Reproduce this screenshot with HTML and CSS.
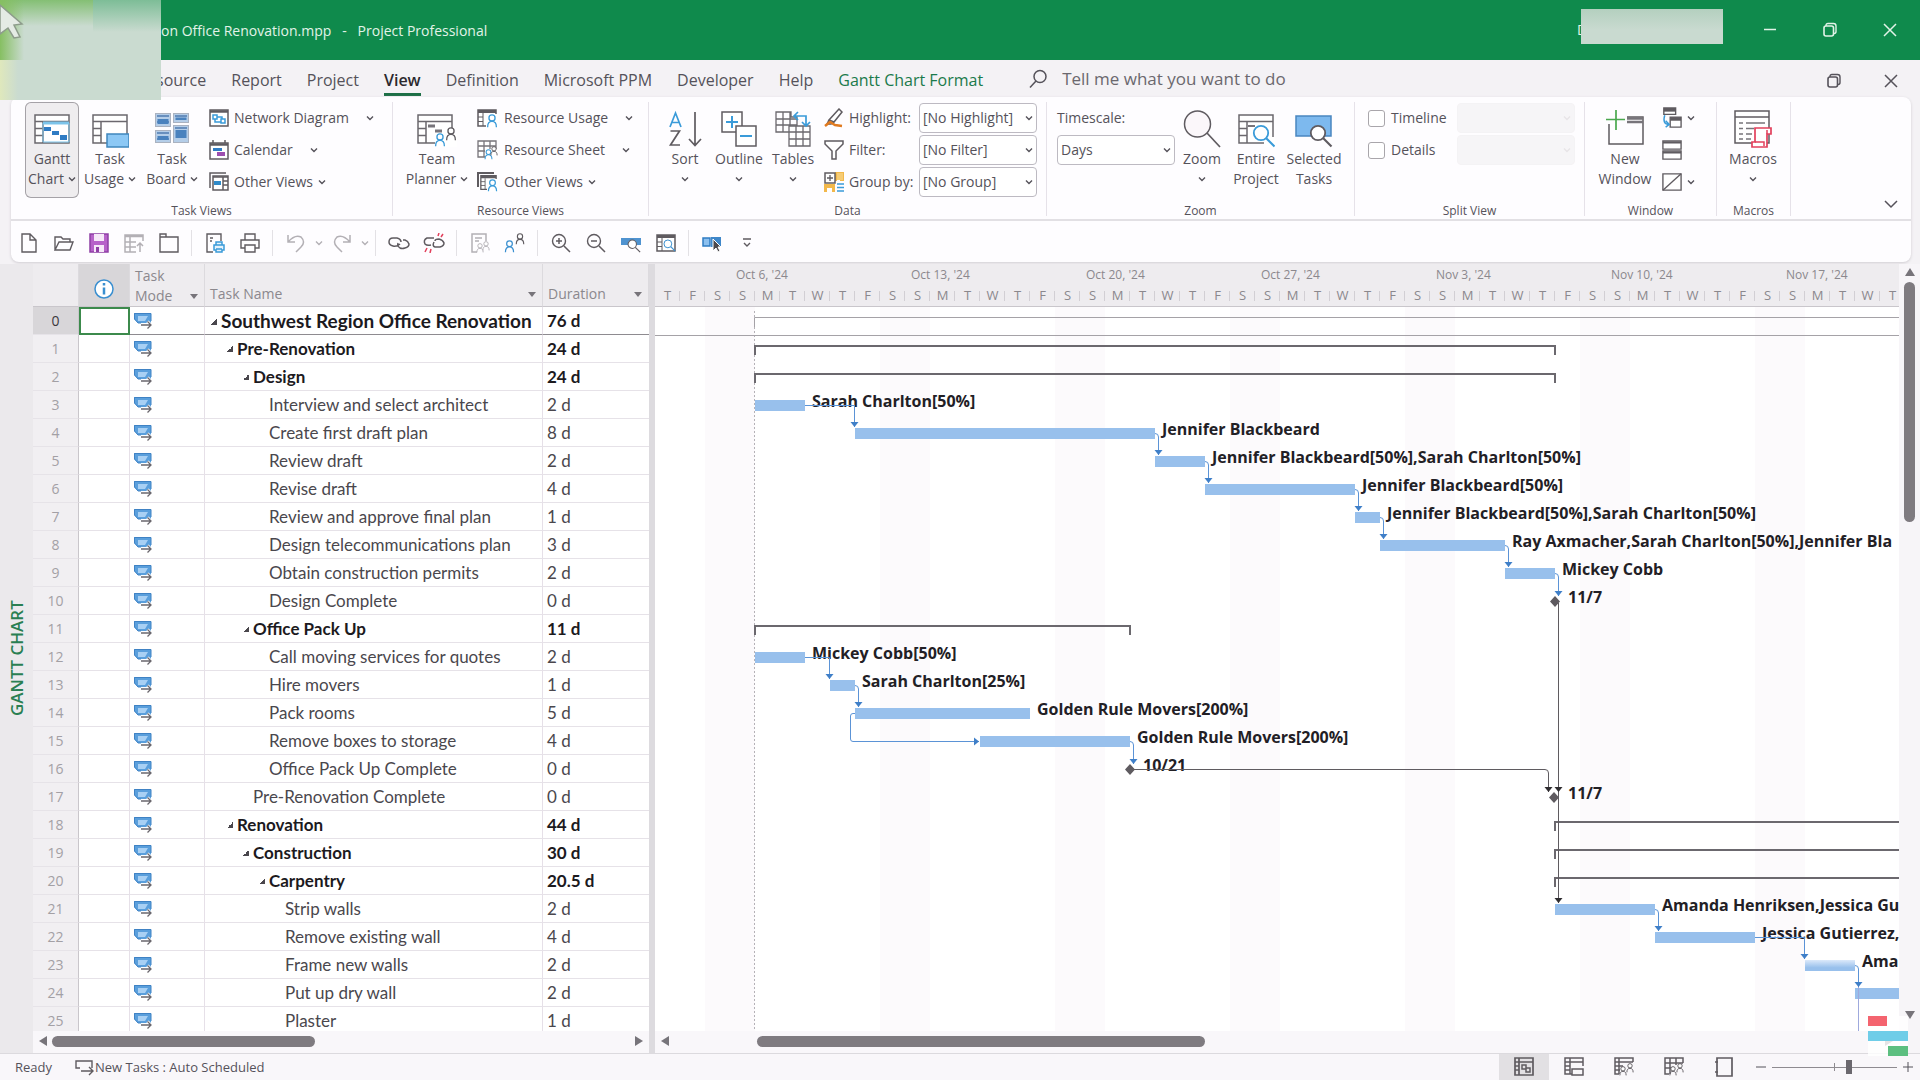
FILE: index.html
```html
<!DOCTYPE html>
<html lang="en">
<head>
<meta charset="utf-8">
<title>Southwest Region Office Renovation.mpp - Project Professional</title>
<link rel="stylesheet" href="styles.css">
</head>
<body>
<svg class="defs" aria-hidden="true">
  <symbol id="chev" viewBox="0 0 8 8"><path d="M1 2.5 4 5.5 7 2.5" fill="none" stroke="currentColor" stroke-width="1.4"/></symbol>
  <symbol id="mode" viewBox="0 0 18 18"><path d="M0 1H17V11H4L0 7Z" fill="#5a9fdc"/><path d="M4 4H14L11 9H4Z" fill="#a8d0f4"/><path d="M0.500 1.500H17V9M0.500 1.500V7L4 11H7" fill="none" stroke="#3f82c4"/><path d="M8 13H17M13.500 9.500 17 13 13.500 17" fill="none" stroke="#fff" stroke-width="3"/><path d="M7 13H17M13.500 9.500 17 13 13.500 16.500" fill="none" stroke="#6a676d" stroke-width="1.300"/></symbol>
  <symbol id="restore" viewBox="0 0 16 16"><path d="M4 4V3.500Q4 1.500 6 1.500H11.500Q14 1.500 14 4V9.500Q14 11.500 12 11.500" fill="none" stroke="currentColor" stroke-width="1.400"/><rect x="2" y="4" width="9.500" height="10" rx="2" fill="none" stroke="currentColor" stroke-width="1.600"/></symbol>
  <symbol id="close" viewBox="0 0 16 16"><path d="M2 2 14 14M14 2 2 14" stroke="currentColor" stroke-width="1.500"/></symbol>
  <symbol id="person" viewBox="0 0 12 16"><circle cx="6" cy="4.500" r="3.500" fill="#fff" stroke="currentColor" stroke-width="1.500"/><path d="M1 15Q1 8.500 6 8.500T11 15" fill="none" stroke="currentColor" stroke-width="1.500"/></symbol>
  <symbol id="grid" viewBox="0 0 36 30"><path d="M1 1H35V29H1Z" fill="#fff" stroke="#6b686e" stroke-width="1.500"/><path d="M1 7.500H35M9 7.500V29M1 14.500H9M1 21.500H9" fill="none" stroke="#6b686e" stroke-width="1.500"/></symbol>
  <symbol id="minigrid" viewBox="0 0 20 20"><path d="M1 2H19V18H1Z" fill="#fff" stroke="#5f5b60" stroke-width="1.500"/><path d="M1 3.500H19" stroke="#5f5b60" stroke-width="3"/><path d="M6 5V18M1 9H6M1 13.500H6" fill="none" stroke="#5f5b60"/></symbol>
  <symbol id="lens" viewBox="0 0 16 16"><circle cx="6" cy="6" r="4.800" fill="#fff" stroke="currentColor" stroke-width="1.200"/><path d="M9.500 9.500 15 15" stroke="currentColor" stroke-width="1.400"/></symbol>
</svg>

<header class="titlebar">
  <h1 class="doc-title">on Office Renovation.mpp&nbsp;&nbsp; -&nbsp;&nbsp; Project Professional</h1>
  <span class="user">D</span><span class="user-mask"></span>
  <button class="wbtn" aria-label="Minimize"><svg width="16" height="16"><path d="M2 7.500H14" stroke="currentColor" stroke-width="1.500"/></svg></button>
  <button class="wbtn" aria-label="Restore"><svg width="16" height="16"><use href="#restore"/></svg></button>
  <button class="wbtn" aria-label="Close"><svg width="16" height="16"><use href="#close"/></svg></button>
</header>

<div class="corner-mask"><svg width="24" height="40" aria-hidden="true"><path d="M0 5 22 24 14 25 20 37 14 38 8 28 0 34Z" fill="#e4ebe4" stroke="#8d9c8b" stroke-width="1.500"/></svg></div>

<nav class="tabs">
  <a href="#">source</a><a href="#">Report</a><a href="#">Project</a><a href="#" class="on">View</a><a href="#">Definition</a><a href="#">Microsoft PPM</a><a href="#">Developer</a><a href="#">Help</a><a href="#" class="ctx">Gantt Chart Format</a>
  <label class="search"><svg width="20" height="20"><circle cx="12" cy="7.500" r="6" fill="none" stroke="currentColor" stroke-width="1.500"/><path d="M8 12 2 18.500" stroke="currentColor" stroke-width="1.500"/></svg><input type="text" aria-label="Search" placeholder="Tell me what you want to do"></label>
  <button class="tbtn" aria-label="Restore document"><svg width="16" height="16"><use href="#restore"/></svg></button>
  <button class="tbtn" aria-label="Close document"><svg width="16" height="16"><use href="#close"/></svg></button>
</nav>

<section class="panel">
  <div class="ribbon">
    <div class="group g-task">
      <div class="tools">
        <button class="big on"><svg width="38" height="36" viewBox="0 0 38 36"><use href="#grid" x="1" y="3" width="36" height="30"/><path d="M10 12H36" stroke="#7cc4ea" stroke-width="3"/><path d="M10 12V31H36V12" fill="none" stroke="#7cc4ea"/><path d="M11 16H18V20H11ZM19 20H26V24H19ZM27 24H34V29H27Z" fill="#2f7cc4"/></svg><span>Gantt</span><span>Chart <svg class="chev"><use href="#chev"/></svg></span></button>
        <button class="big w60"><svg width="38" height="36" viewBox="0 0 38 36"><use href="#grid" x="1" y="3" width="36" height="30"/><rect x="16" y="23" width="22" height="13" fill="#8cc8f5" stroke="#3f87bd" stroke-width="1.500"/></svg><span>Task</span><span>Usage <svg class="chev"><use href="#chev"/></svg></span></button>
        <button class="big w60"><svg width="38" height="36" viewBox="0 0 38 36"><g fill="#b4cde8" stroke="#aab2c0"><rect x="2.500" y="2.500" width="15" height="13"/><rect x="2.500" y="19.500" width="15" height="12"/><rect x="20.500" y="2.500" width="15" height="9"/><rect x="20.500" y="14.500" width="15" height="17"/></g><path d="M4 5H16M4 11H16M22 5H34M4 22H16M4 28H16M22 17H34" stroke="#4f7bb0" stroke-width="1.500"/><path d="M4.500 8H15.500V13H4.500ZM22.500 6.500H33.500V9H22.500ZM4.500 25H15.500V29H4.500ZM22.500 19H33.500V27H22.500Z" fill="#4a82be"/></svg><span>Task</span><span>Board <svg class="chev"><use href="#chev"/></svg></span></button>
        <div class="stack">
          <button class="small wide"><svg width="20" height="20"><path d="M1 2H19V18H1Z" fill="#fff" stroke="#5f5b60" stroke-width="1.500"/><path d="M1 3.500H19" stroke="#5f5b60" stroke-width="2.500"/><path d="M4 7H8V11H4ZM12 11H16V15H12ZM6 11V14H12M8 9H13V11" fill="none" stroke="#3a9bd9" stroke-width="1.500"/></svg>Network Diagram<svg class="chev"><use href="#chev"/></svg></button>
          <button class="small wide"><svg width="20" height="20"><path d="M1 3H19V19H1ZM4 0V3M16 0V3" fill="#fff" stroke="#5f5b60" stroke-width="1.500"/><path d="M1 4.500H19" stroke="#5f5b60" stroke-width="2.500"/><path d="M4 8H13V11H4Z" fill="#2f7cc4"/><path d="M8 12H16V16H8Z" fill="#9d4fb0"/></svg>Calendar<svg class="chev"><use href="#chev"/></svg></button>
          <button class="small"><svg width="20" height="20"><path d="M1 16V1H17" fill="none" stroke="#5f5b60" stroke-width="1.500"/><path d="M4 4H19V18H4Z" fill="#fff" stroke="#5f5b60" stroke-width="1.500"/><path d="M4 5H19M14 5V18M14 9H19M14 13H19" stroke="#5f5b60" stroke-width="1.500"/><path d="M5 9H12V13H5Z" fill="#2f8ac9"/></svg>Other Views<svg class="chev"><use href="#chev"/></svg></button>
        </div>
      </div>
      <h2>Task Views</h2>
    </div>
    <div class="group g-res">
      <div class="tools">
        <button class="big w68"><svg width="40" height="36" viewBox="0 0 40 36"><use href="#grid" x="0" y="3" width="36" height="30"/><path d="M11 15H18M18 20H25" stroke="#77747a" stroke-width="3"/><path d="M18 23H40V36H18Z" fill="#fff"/><g color="#3a9bd9"><use href="#person" x="17" y="22" width="12" height="14"/></g><g color="#5f5b60"><use href="#person" x="28" y="16" width="12" height="14"/></g></svg><span>Team</span><span>Planner <svg class="chev"><use href="#chev"/></svg></span></button>
        <div class="stack">
          <button class="small wide"><svg width="22" height="20"><use href="#minigrid" width="20" height="20"/><path d="M9 6H22V20H9Z" fill="#fff"/><g color="#3a9bd9"><use href="#person" x="9" y="6" width="12" height="14"/></g></svg>Resource Usage<svg class="chev"><use href="#chev"/></svg></button>
          <button class="small wide"><svg width="22" height="20"><path d="M1 1H19V17H1ZM1 6H19M1 11H12M7 1V17M13 1V10" fill="#fff" stroke="#77747a" stroke-width="1.300"/><path d="M8 9H22V20H8Z" fill="#fff"/><g color="#3a9bd9"><use href="#person" x="7" y="9" width="9" height="11"/></g><g color="#5f5b60"><use href="#person" x="13" y="6" width="8" height="10"/></g></svg>Resource Sheet<svg class="chev"><use href="#chev"/></svg></button>
          <button class="small"><svg width="22" height="20"><path d="M1 15V1H17" fill="none" stroke="#5f5b60" stroke-width="2"/><use href="#minigrid" x="3" y="2" width="17" height="17"/><path d="M10 7H22V20H10Z" fill="#fff"/><g color="#3a9bd9"><use href="#person" x="10" y="7" width="11" height="13"/></g></svg>Other Views<svg class="chev"><use href="#chev"/></svg></button>
        </div>
      </div>
      <h2>Resource Views</h2>
    </div>
    <div class="group g-data">
      <div class="tools">
        <button class="big w54"><svg width="36" height="36" viewBox="0 0 36 36"><path d="M3 16 8.500 2 14 16M5 11.500H12" fill="none" stroke="#3a9bd9" stroke-width="1.700"/><path d="M3.500 20H12.500L3.500 34H13" fill="none" stroke="#5f5b60" stroke-width="1.700"/><path d="M28 1V34M22 28 28 34.500 34 28" fill="none" stroke="#5f5b60" stroke-width="1.700"/></svg><span>Sort</span><span><svg class="chev"><use href="#chev"/></svg></span></button>
        <button class="big w54"><svg width="36" height="36" viewBox="0 0 36 36"><rect x="1" y="1" width="20" height="20" fill="#fff" stroke="#5f5b60" stroke-width="1.500"/><path d="M11 5V17M5 11H17" stroke="#3a9bd9" stroke-width="2"/><rect x="15" y="15" width="20" height="20" fill="#fff" stroke="#5f5b60" stroke-width="1.500"/><path d="M19 25H31" stroke="#3a9bd9" stroke-width="2"/></svg><span>Outline</span><span><svg class="chev"><use href="#chev"/></svg></span></button>
        <button class="big w54"><svg width="36" height="36" viewBox="0 0 36 36"><path d="M1 1H16V6H22V21H1ZM1 8H22M1 14H22M8 1V21M15 1V21" fill="none" stroke="#6b686e" stroke-width="1.300"/><path d="M14 15H35V35H14ZM14 21H35M14 28H35M21 15V35M28 15V35" fill="#fff" stroke="#6b686e" stroke-width="1.300"/><path d="M19 5H31V15M23 1 19 5 23 9M27 11 31 15 35 11" fill="none" stroke="#3a9bd9" stroke-width="1.700"/></svg><span>Tables</span><span><svg class="chev"><use href="#chev"/></svg></span></button>
        <div class="fields">
          <label for="hl"><svg width="20" height="20"><path d="M15 1 18 4 10 14 5 12ZM5 12 3 16 7 16 10 14" fill="#fff" stroke="#5f5b60" stroke-width="1.500"/><path d="M1 18 6 14 11 17 18 18" fill="none" stroke="#e07a1f" stroke-width="2.500"/></svg>Highlight:</label><span class="combo"><select id="hl"><option>[No Highlight]</option></select><svg class="chev"><use href="#chev"/></svg></span>
          <label for="fl"><svg width="20" height="20"><path d="M1 1H19V4L12 11V19H8V11L1 4Z" fill="#fff" stroke="#5f5b60" stroke-width="1.500"/></svg>Filter:</label><span class="combo"><select id="fl"><option>[No Filter]</option></select><svg class="chev"><use href="#chev"/></svg></span>
          <label for="gr"><svg width="20" height="20"><path d="M11 0H20V9H16V3H13V9H11ZM0 12H11V20H8V16H3V20H0Z" fill="#f2b84b"/><path d="M13 1H19V8H13Z" fill="#f6cc75"/><rect x="1" y="1" width="10" height="10" fill="#fff" stroke="#5f5b60" stroke-width="1.500"/><path d="M6 3V9M3 6H9" stroke="#5f5b60" stroke-width="1.300"/><path d="M13 12H20M13 15.500H20M13 19H20" stroke="#3a9bd9" stroke-width="1.500"/></svg>Group by:</label><span class="combo"><select id="gr"><option>[No Group]</option></select><svg class="chev"><use href="#chev"/></svg></span>
        </div>
      </div>
      <h2>Data</h2>
    </div>
    <div class="group g-zoom">
      <div class="tools">
        <div class="scale"><label for="ts">Timescale:</label><span class="combo"><select id="ts"><option>Days</option></select><svg class="chev"><use href="#chev"/></svg></span></div>
        <button class="big w54"><svg width="38" height="38" viewBox="0 0 38 38"><circle cx="14.500" cy="14" r="13" fill="#fbf7fa" stroke="#5f5b60" stroke-width="1.500"/><path d="M24 23 37 37" stroke="#5f5b60" stroke-width="1.700"/></svg><span>Zoom</span><span><svg class="chev"><use href="#chev"/></svg></span></button>
        <button class="big w54"><svg width="38" height="36" viewBox="0 0 38 36"><use href="#grid" x="1" y="3" width="36" height="30"/><path d="M11 15H18" stroke="#77747a" stroke-width="2"/><path d="M27 26H38V36H27Z" fill="#fff"/><g color="#3a9bd9"><use href="#lens" x="15" y="13" width="24" height="24"/></g></svg><span>Entire</span><span>Project</span></button>
        <button class="big w62"><svg width="38" height="36" viewBox="0 0 38 36"><rect x="1" y="5" width="35" height="20" fill="#7db9ee" stroke="#4a86c0" stroke-width="1.500"/><g color="#5f5b60"><use href="#lens" x="14" y="13" width="24" height="24"/></g></svg><span>Selected</span><span>Tasks</span></button>
      </div>
      <h2>Zoom</h2>
    </div>
    <div class="group g-split">
      <div class="tools split">
        <label><input type="checkbox">Timeline</label><span class="combo"><select disabled aria-label="Timeline view"></select><svg class="chev"><use href="#chev"/></svg></span>
        <label><input type="checkbox">Details</label><span class="combo"><select disabled aria-label="Details view"></select><svg class="chev"><use href="#chev"/></svg></span>
      </div>
      <h2>Split View</h2>
    </div>
    <div class="group g-win">
      <div class="tools">
        <button class="big w62"><svg width="40" height="38" viewBox="0 0 40 38"><path d="M4 14V34H38V7H22" fill="none" stroke="#5f5b60" stroke-width="1.500"/><path d="M22 8.500H38M22 12H38" stroke="#77747a" stroke-width="2.500"/><path d="M11 0V20M1 9.500H20" stroke="#4aa84e" stroke-width="1.700"/></svg><span>New</span><span>Window</span></button>
        <div class="stack">
          <button class="small" aria-label="Switch windows"><svg width="20" height="22" viewBox="0 0 22 24"><path d="M2 1H15V8H2Z" fill="#fff" stroke="#5f5b60" stroke-width="1.500"/><path d="M2 3H15" stroke="#5f5b60" stroke-width="4"/><path d="M9 11H21V22H9Z" fill="#fff" stroke="#5f5b60" stroke-width="1.500"/><path d="M9 13H21" stroke="#5f5b60" stroke-width="4"/><path d="M3 9Q0 19 8 19M4 15 8 19 4 22" fill="none" stroke="#3a9bd9" stroke-width="1.600"/></svg><svg class="chev"><use href="#chev"/></svg></button>
          <button class="small" aria-label="Arrange all"><svg width="20" height="20" viewBox="0 0 22 22"><path d="M1 1H21V10H1ZM1 12H21V21H1Z" fill="#fff" stroke="#5f5b60" stroke-width="1.500"/><path d="M1 2.500H21M1 13.500H21" stroke="#5f5b60" stroke-width="2.500"/></svg></button>
          <button class="small" aria-label="Hide"><svg width="20" height="20" viewBox="0 0 22 22"><path d="M1 2H21V20H1Z" fill="#fff" stroke="#5f5b60" stroke-width="1.500"/><path d="M1 20 21 2" stroke="#5f5b60" stroke-width="1.500"/></svg><svg class="chev"><use href="#chev"/></svg></button>
        </div>
      </div>
      <h2>Window</h2>
    </div>
    <div class="group g-mac">
      <div class="tools">
        <button class="big w62"><svg width="38" height="38" viewBox="0 0 38 38"><path d="M1 1H35V33H1Z" fill="#fff" stroke="#5f5b60" stroke-width="1.500"/><path d="M1 7H35" stroke="#5f5b60" stroke-width="1.500"/><path d="M5 13H9M5 18.500H9M5 24H9M5 29H9M12 13H31M12 18.500H20M12 24H18M12 29H17" stroke="#77747a" stroke-width="1.700"/><path d="M21 18H37V24H33V37H18V32H21Z" fill="#fff" stroke="#e2405c" stroke-width="1.700"/><path d="M33 20V24M21 32H30V36" fill="none" stroke="#e2405c" stroke-width="1.500"/></svg><span>Macros</span><span><svg class="chev"><use href="#chev"/></svg></span></button>
      </div>
      <h2>Macros</h2>
    </div>
    <button class="collapse" aria-label="Collapse the ribbon"><svg width="14" height="14" viewBox="0 0 14 14"><path d="M1 4 7 10 13 4" fill="none" stroke="currentColor" stroke-width="1.500"/></svg></button>
  </div>

  <div class="qat">
    <button aria-label="New"><svg width="20" height="20"><path d="M3 1H11L17 7V19H3ZM11 1V7H17" fill="none" stroke="currentColor" stroke-width="1.400"/></svg></button>
    <button aria-label="Open"><svg width="20" height="20"><path d="M1 17V4H7L9 6H16V9M1 17H16L19 9H5Z" fill="none" stroke="currentColor" stroke-width="1.400"/></svg></button>
    <button aria-label="Save"><svg width="20" height="20"><path d="M1 1H19V19H1Z" fill="#b762c9" stroke="#8f3fa5" stroke-width="1.500"/><path d="M5 1H15V8H5ZM5 12H15V19H5Z" fill="#f6e8f8"/><path d="M7 14H10V19H7Z" fill="#8f3fa5"/></svg></button>
    <button aria-label="Update table" class="dim"><svg width="20" height="20"><path d="M19 8V2H1V19H12M1 3.500H19M6 4V19M1 9H12M1 14H12M16 19V10M13 13 16 10 19 13" fill="none" stroke="currentColor" stroke-width="1.500"/></svg></button>
    <button aria-label="Close project"><svg width="20" height="20"><path d="M1 4V19H19V4H1V1H7V4" fill="none" stroke="currentColor" stroke-width="1.400"/></svg></button>
    <i class="sep"></i>
    <button aria-label="Print preview"><svg width="20" height="20"><path d="M16 8V1H2V19H8M5 5H8M5 8H7" fill="none" stroke="currentColor" stroke-width="1.400"/><path d="M9 12H19V17H17V19H11V17H9ZM11 12V9H17V12M11 16H17" fill="#e5f2fb" stroke="#3a9bd9" stroke-width="1.500"/></svg></button>
    <button aria-label="Print"><svg width="20" height="20"><path d="M5 7V1H15V7M5 15H1V7H19V15H15M5 12H15V19H5Z" fill="none" stroke="currentColor" stroke-width="1.400"/></svg></button>
    <i class="sep"></i>
    <button aria-label="Undo" class="dim"><svg width="20" height="20"><path d="M2 2V9H9M2 9Q9 1 15 4 20 9 15 14L10 19" fill="none" stroke="currentColor" stroke-width="1.500"/></svg></button>
    <button aria-label="Undo list" class="dim thin"><svg class="chev"><use href="#chev"/></svg></button>
    <button aria-label="Redo" class="dim"><svg width="20" height="20"><path d="M18 2V9H11M18 9Q11 1 5 4 0 9 5 14L10 19" fill="none" stroke="currentColor" stroke-width="1.500"/></svg></button>
    <button aria-label="Redo list" class="dim thin"><svg class="chev"><use href="#chev"/></svg></button>
    <i class="sep"></i>
    <button aria-label="Link tasks"><svg width="22" height="20"><path d="M12 11Q9 14 5 13 1 12 1 9 1 5 5 5H9Q13 6 13 9M10 10Q9 13 12 15 14 16 17 15 21 14 21 11 20 8 17 7H15" fill="none" stroke="currentColor" stroke-width="1.500"/></svg></button>
    <button aria-label="Unlink tasks"><svg width="22" height="20"><path d="M8 12Q4 13 2 11 0 7 4 5H11M11 9Q9 13 12 14H17Q21 13 21 10 20 7 16 6 12 6 12 8" fill="none" stroke="currentColor" stroke-width="1.500"/><path d="M15 3 16 0M18 4 20 1M4 15 2 19M8 16 7 20" stroke="#e2405c" stroke-width="1.500"/></svg></button>
    <i class="sep"></i>
    <button aria-label="Notes" class="dim"><svg width="20" height="20"><path d="M16 8V1H2V19H7M5 5H12M5 8H9" fill="none" stroke="currentColor" stroke-width="1.500"/><use href="#person" x="6" y="10" width="8" height="10"/><use href="#person" x="12" y="8" width="8" height="10"/></svg></button>
    <button aria-label="Assign resources"><svg width="22" height="20"><g color="#3a8fd0"><use href="#person" x="0" y="7" width="11" height="13"/></g><use href="#person" x="11" y="0" width="10" height="12"/></svg></button>
    <i class="sep"></i>
    <button aria-label="Zoom in"><svg width="20" height="20"><circle cx="8" cy="8" r="6.500" fill="none" stroke="currentColor" stroke-width="1.400"/><path d="M13 13 19 19M5 8H11M8 5V11" stroke="currentColor" stroke-width="1.500"/></svg></button>
    <button aria-label="Zoom out"><svg width="20" height="20"><circle cx="8" cy="8" r="6.500" fill="none" stroke="currentColor" stroke-width="1.400"/><path d="M13 13 19 19M5 8H11" stroke="currentColor" stroke-width="1.500"/></svg></button>
    <button aria-label="Zoom selected tasks"><svg width="20" height="20"><path d="M0 5H20V12H0Z" fill="#4f93d0"/><use href="#lens" x="6" y="6" width="14" height="14"/></svg></button>
    <button aria-label="Entire project"><svg width="20" height="20"><use href="#minigrid" width="20" height="20"/><g color="#3a8fd0"><use href="#lens" x="7" y="6" width="13" height="13"/></g></svg></button>
    <i class="sep"></i>
    <button aria-label="Scroll to task"><svg width="20" height="20"><path d="M1 5H8V13H1Z" fill="#8cc0ef" stroke="#2f7cc4" stroke-width="1.500"/><path d="M9 4H19V14H9Z" fill="#3f87c9"/><path d="M11 6V18L14 15 16 19 18 18 16 14H19Z" fill="#4b484d" stroke="#fff"/></svg></button>
    <button aria-label="Customize toolbar"><svg width="10" height="12"><path d="M1 2H9M2 6 5 9 8 6" fill="none" stroke="currentColor" stroke-width="1.400"/></svg></button>
  </div>
</section>

<main class="work">
  <div class="viewname">GANTT CHART</div>
  <section class="left">
    <div class="clip">
    <table class="tasks">
      <colgroup><col class="c-n"><col class="c-i"><col class="c-m"><col class="c-t"><col class="c-d"></colgroup>
      <thead><tr>
        <th></th>
        <th class="info"><svg width="22" height="22"><circle cx="11" cy="11" r="9" fill="#fff" stroke="#3a8fd0" stroke-width="1.500"/><path d="M11 5V7.500M11 9.500V16.500" stroke="#3a8fd0" stroke-width="2.500"/></svg></th>
        <th class="mode"><span>Task Mode</span><b class="dd"></b></th><th><span>Task Name</span><b class="dd"></b></th><th><span>Duration</span><b class="dd"></b></th>
      </tr></thead>
      <tbody>
      <tr class="sum top"><th>0</th><td></td><td><svg class="m"><use href="#mode"/></svg></td><td class="l0"><b class="tri"></b>Southwest Region Office Renovation</td><td>76 d</td></tr>
      <tr class="sum"><th>1</th><td></td><td><svg class="m"><use href="#mode"/></svg></td><td class="l1"><b class="tri"></b>Pre-Renovation</td><td>24 d</td></tr>
      <tr class="sum"><th>2</th><td></td><td><svg class="m"><use href="#mode"/></svg></td><td class="l2"><b class="tri"></b>Design</td><td>24 d</td></tr>
      <tr><th>3</th><td></td><td><svg class="m"><use href="#mode"/></svg></td><td class="l3">Interview and select architect</td><td>2 d</td></tr>
      <tr><th>4</th><td></td><td><svg class="m"><use href="#mode"/></svg></td><td class="l3">Create first draft plan</td><td>8 d</td></tr>
      <tr><th>5</th><td></td><td><svg class="m"><use href="#mode"/></svg></td><td class="l3">Review draft</td><td>2 d</td></tr>
      <tr><th>6</th><td></td><td><svg class="m"><use href="#mode"/></svg></td><td class="l3">Revise draft</td><td>4 d</td></tr>
      <tr><th>7</th><td></td><td><svg class="m"><use href="#mode"/></svg></td><td class="l3">Review and approve final plan</td><td>1 d</td></tr>
      <tr><th>8</th><td></td><td><svg class="m"><use href="#mode"/></svg></td><td class="l3">Design telecommunications plan</td><td>3 d</td></tr>
      <tr><th>9</th><td></td><td><svg class="m"><use href="#mode"/></svg></td><td class="l3">Obtain construction permits</td><td>2 d</td></tr>
      <tr><th>10</th><td></td><td><svg class="m"><use href="#mode"/></svg></td><td class="l3">Design Complete</td><td>0 d</td></tr>
      <tr class="sum"><th>11</th><td></td><td><svg class="m"><use href="#mode"/></svg></td><td class="l2"><b class="tri"></b>Office Pack Up</td><td>11 d</td></tr>
      <tr><th>12</th><td></td><td><svg class="m"><use href="#mode"/></svg></td><td class="l3">Call moving services for quotes</td><td>2 d</td></tr>
      <tr><th>13</th><td></td><td><svg class="m"><use href="#mode"/></svg></td><td class="l3">Hire movers</td><td>1 d</td></tr>
      <tr><th>14</th><td></td><td><svg class="m"><use href="#mode"/></svg></td><td class="l3">Pack rooms</td><td>5 d</td></tr>
      <tr><th>15</th><td></td><td><svg class="m"><use href="#mode"/></svg></td><td class="l3">Remove boxes to storage</td><td>4 d</td></tr>
      <tr><th>16</th><td></td><td><svg class="m"><use href="#mode"/></svg></td><td class="l3">Office Pack Up Complete</td><td>0 d</td></tr>
      <tr><th>17</th><td></td><td><svg class="m"><use href="#mode"/></svg></td><td class="l2">Pre-Renovation Complete</td><td>0 d</td></tr>
      <tr class="sum"><th>18</th><td></td><td><svg class="m"><use href="#mode"/></svg></td><td class="l1"><b class="tri"></b>Renovation</td><td>44 d</td></tr>
      <tr class="sum"><th>19</th><td></td><td><svg class="m"><use href="#mode"/></svg></td><td class="l2"><b class="tri"></b>Construction</td><td>30 d</td></tr>
      <tr class="sum"><th>20</th><td></td><td><svg class="m"><use href="#mode"/></svg></td><td class="l3"><b class="tri"></b>Carpentry</td><td>20.5 d</td></tr>
      <tr><th>21</th><td></td><td><svg class="m"><use href="#mode"/></svg></td><td class="l4">Strip walls</td><td>2 d</td></tr>
      <tr><th>22</th><td></td><td><svg class="m"><use href="#mode"/></svg></td><td class="l4">Remove existing wall</td><td>4 d</td></tr>
      <tr><th>23</th><td></td><td><svg class="m"><use href="#mode"/></svg></td><td class="l4">Frame new walls</td><td>2 d</td></tr>
      <tr><th>24</th><td></td><td><svg class="m"><use href="#mode"/></svg></td><td class="l4">Put up dry wall</td><td>2 d</td></tr>
      <tr><th>25</th><td></td><td><svg class="m"><use href="#mode"/></svg></td><td class="l4">Plaster</td><td>1 d</td></tr>
      </tbody>
    </table>
    </div>
    <div class="hbar"><b class="al"></b><span class="track"><b class="thumb t1"></b></span><b class="ar"></b></div>
  </section>
  <section class="right">
    <div class="weeks"><span class="part"></span><span>Oct 6, '24</span><span>Oct 13, '24</span><span>Oct 20, '24</span><span>Oct 27, '24</span><span>Nov 3, '24</span><span>Nov 10, '24</span><span>Nov 17, '24</span></div>
    <div class="days"><i>T</i><i>F</i><i>S</i><i>S</i><i>M</i><i>T</i><i>W</i><i>T</i><i>F</i><i>S</i><i>S</i><i>M</i><i>T</i><i>W</i><i>T</i><i>F</i><i>S</i><i>S</i><i>M</i><i>T</i><i>W</i><i>T</i><i>F</i><i>S</i><i>S</i><i>M</i><i>T</i><i>W</i><i>T</i><i>F</i><i>S</i><i>S</i><i>M</i><i>T</i><i>W</i><i>T</i><i>F</i><i>S</i><i>S</i><i>M</i><i>T</i><i>W</i><i>T</i><i>F</i><i>S</i><i>S</i><i>M</i><i>T</i><i>W</i><i>T</i></div>
    <div class="chart">
      <svg class="plot">
        <defs>
          <marker id="ab" viewBox="0 0 10 8" refX="5" refY="7" markerWidth="10" markerHeight="8" markerUnits="userSpaceOnUse"><path d="M1 2H9L5 7Z"/></marker>
          <marker id="ak" viewBox="0 0 10 8" refX="5" refY="7" markerWidth="10" markerHeight="8" markerUnits="userSpaceOnUse"><path d="M1 2H9L5 7Z"/></marker>
          <marker id="ah" viewBox="0 0 8 10" refX="7" refY="5" markerWidth="8" markerHeight="10" markerUnits="userSpaceOnUse"><path d="M2 1V9L7 5Z"/></marker>
          <linearGradient id="fade" x2="0" y2="1"><stop offset="0" stop-color="#dce9fa"/><stop offset="0.700" stop-color="#98c0ec"/></linearGradient>
        </defs>
        <path class="start" d="M99.500 4V724"/>
        <path class="frame" d="M0 28.500H3000M99.500 20V10.500H3000"/>
        <g class="sumbar"><path d="M100 48V39H900V48"/><path d="M100 76V67H900V76"/><path d="M100 328V319H475V328"/><path d="M900 524V515H3000"/><path d="M900 552V543H3000"/><path d="M900 580V571H3000"/></g>
        <g class="bar">
          <rect x="100" y="93" width="50" height="11"/><rect x="200" y="121" width="300" height="11"/><rect x="500" y="149" width="50" height="11"/><rect x="550" y="177" width="150" height="11"/><rect x="700" y="205" width="25" height="11"/><rect x="725" y="233" width="125" height="11"/><rect x="850" y="261" width="50" height="11"/>
          <rect x="100" y="345" width="50" height="11"/><rect x="175" y="373" width="25" height="11"/><rect x="200" y="401" width="175" height="11"/><rect x="325" y="429" width="150" height="11"/>
          <rect x="900" y="597" width="100" height="11"/><rect x="1000" y="625" width="100" height="11"/><rect class="soft" x="1150" y="653" width="50" height="11"/><rect x="1200" y="681" width="50" height="11"/>
        </g>
        <g class="names">
          <text x="157" y="100">Sarah Charlton[50%]</text><text x="507" y="128">Jennifer Blackbeard</text><text x="557" y="156">Jennifer Blackbeard[50%],Sarah Charlton[50%]</text><text x="707" y="184">Jennifer Blackbeard[50%]</text><text x="732" y="212">Jennifer Blackbeard[50%],Sarah Charlton[50%]</text><text x="857" y="240">Ray Axmacher,Sarah Charlton[50%],Jennifer Bla</text><text x="907" y="268">Mickey Cobb</text><text x="913" y="296">11/7</text>
          <text x="157" y="352">Mickey Cobb[50%]</text><text x="207" y="380">Sarah Charlton[25%]</text><text x="382" y="408">Golden Rule Movers[200%]</text><text x="482" y="436">Golden Rule Movers[200%]</text><text x="488" y="464">10/21</text><text x="913" y="492">11/7</text>
          <text x="1007" y="604">Amanda Henriksen,Jessica Gu</text><text x="1107" y="632">Jessica Gutierrez,</text><text x="1207" y="660">Ama</text>
        </g>
        <g class="link">
          <path d="M150 98.500H199.500V120"/><path d="M500 126.500Q503.500 126.500 503.500 130V148"/><path d="M550 154.500Q553.500 154.500 553.500 158V176"/><path d="M700 182.500Q703.500 182.500 703.500 186V204"/><path d="M725 210.500Q728.500 210.500 728.500 214V232"/><path d="M850 238.500Q853.500 238.500 853.500 242V260"/><path d="M900 266.500Q903.500 266.500 903.500 270V289"/>
          <path d="M150 350.500H174.500V372"/><path d="M200 378.500Q203.500 378.500 203.500 382V400"/><path class="h" d="M200 406.500H198Q195.500 406.500 195.500 409V432Q195.500 434.500 198 434.500H324"/><path d="M475 434.500Q478.500 434.500 478.500 438V457"/>
          <path d="M1000 602.500Q1003.500 602.500 1003.500 606V624"/><path d="M1100 630.500H1149.500V652"/><path d="M1200 658.500Q1203.500 658.500 1203.500 662V680"/><path class="n" d="M1203.500 680V724"/>
        </g>
        <g class="klink"><path d="M475 462.500H890Q893.500 462.500 893.500 466V485"/><path d="M903.500 296V485"/><path d="M903.500 485V596"/></g>
        <path class="stone" d="M900 289 905 294.500 900 300 895 294.500ZM475 457 480 462.500 475 468 470 462.500ZM899 485 904 490.500 899 496 894 490.500Z"/>
      </svg>
    </div>
    <div class="hbar"><b class="al"></b><span class="track tr"><b class="thumb t2"></b></span><b class="ar"></b></div>
    <div class="brand" aria-hidden="true"><b></b><b></b><b></b></div>
  </section>
  <div class="vbar"><b class="au"></b><span class="vthumb"></span><b class="ad"></b></div>
</main>

<footer class="status">
  <span>Ready</span>
  <button class="newtasks"><svg width="20" height="20"><path d="M5 11H1V4H17V11" fill="none" stroke="#5f5b60" stroke-width="1.400"/><path d="M6 14H18M14 10 18 14 14 18" fill="none" stroke="#5f5b60" stroke-width="1.400"/></svg>New Tasks : Auto Scheduled</button>
  <div class="views">
    <button class="on" aria-label="Gantt chart"><svg width="20" height="20"><path d="M1 1H19V18H1ZM1 5H19M5 1V18M1 9H5M1 13H5" fill="none" stroke="currentColor" stroke-width="1.700"/><path d="M8 8H12V12H8ZM12 11H16V15H12Z" fill="none" stroke="currentColor" stroke-width="1.500"/></svg></button>
    <button aria-label="Task usage"><svg width="20" height="20"><path d="M8 17H1V1H19V9M1 5H19M6 1V17M1 9H6M1 13H6M8 12H19V18H8Z" fill="none" stroke="currentColor" stroke-width="1.500"/></svg></button>
    <button aria-label="Team planner"><svg width="20" height="20"><path d="M5 17H1V1H19V5M1 5H19M5 1V17M1 9H9M1 13H6" fill="none" stroke="currentColor" stroke-width="1.500"/><use href="#person" x="5" y="9" width="8" height="10"/><use href="#person" x="12" y="6" width="8" height="10"/></svg></button>
    <button aria-label="Resource sheet"><svg width="20" height="20"><path d="M5 17H1V1H19V6M1 6H19M6 1V17M12 1V8M1 11H9" fill="none" stroke="currentColor" stroke-width="1.500"/><use href="#person" x="5" y="9" width="8" height="10"/><use href="#person" x="12" y="6" width="8" height="10"/></svg></button>
    <button aria-label="Report"><svg width="20" height="20"><path d="M3 1H18V19H3ZM1 5H4M1 15H4" fill="none" stroke="currentColor" stroke-width="1.700"/></svg></button>
  </div>
  <div class="zoomer"><button aria-label="Zoom out"><svg width="10" height="10"><path d="M0 5H10" stroke="currentColor"/></svg></button><input type="range" min="0" max="100" value="62" aria-label="Zoom"><button aria-label="Zoom in"><svg width="10" height="10"><path d="M0 5H10M5 0V10" stroke="currentColor"/></svg></button></div>
</footer>
</body>
</html>
```
FILE: styles.css
```css
* { box-sizing: border-box; }
html, body { height: 100%; }
body {
  margin: 0;
  display: flex;
  flex-direction: column;
  overflow: hidden;
  position: relative;
  background: #f4f2f5;
  color: #55525a;
  font: 14px/20px "Open Sans", "Noto Sans", sans-serif;
}
button { font: inherit; color: inherit; background: none; border: 0; padding: 0; margin: 0; }
h1, h2 { margin: 0; font-weight: 400; }
svg { display: block; flex: none; }
.defs { position: absolute; width: 0; height: 0; }
.chev { width: 8px; height: 8px; }

/* title bar */
.titlebar { display: flex; align-items: center; height: 60px; flex: none; padding: 0 0 0 161px; background: #0f8a4c; color: #e2f3e8; }
.doc-title { font-size: 14px; flex: 1; padding-top: 2px; }
.user { width: 4px; }
.user-mask { width: 142px; height: 35px; margin: 0 17px 8px 0; background: linear-gradient(#b4d0bf, #c9dad0 60%); position: relative; }
.wbtn { width: 60px; height: 60px; display: grid; place-items: center; }
.corner-mask {
  position: absolute; left: 0; top: 0; width: 161px; height: 100px; z-index: 2;
  background:
    linear-gradient(90deg, #86bf62, rgba(134, 191, 98, 0) 24px) 0 0 / 100% 60px no-repeat,
    linear-gradient(90deg, #dfe8bc, rgba(223, 232, 188, 0) 18px) 0 60px / 100% 40px no-repeat,
    linear-gradient(#84bf74, rgba(132, 191, 116, 0)) 0 0 / 93px 26px no-repeat,
    linear-gradient(#7dbd97, rgba(125, 189, 151, 0)) 93px 0 / 68px 32px no-repeat,
    #cadbd0;
}

/* ribbon tabs */
.tabs { display: flex; align-items: center; height: 37px; flex: none; padding: 4px 0 0 156px; gap: 25px; font-size: 16px; }
.tabs a { color: #55525a; text-decoration: none; height: 33px; line-height: 32px; }
.tabs .on { color: #2b292d; font-weight: 600; border-bottom: 3px solid #1d6f46; height: 31px; line-height: 30px; }
.tabs .ctx { color: #1b7a4b; }
.search { display: flex; align-items: center; gap: 14px; flex: 1; margin-left: 20px; padding-bottom: 3px; }
.search input { flex: 1; border: 0; background: none; outline: 0; padding: 0; font: 17px/24px "Open Sans", sans-serif; }
.search input::placeholder { color: #6b686e; opacity: 1; }
.tbtn { width: 32px; height: 33px; display: grid; place-items: center; }
.tbtn:last-child { margin-right: 13px; }

/* ribbon */
.panel { margin: 0 9px 2px 11px; flex: none; background: #fefdff; border-radius: 8px; box-shadow: 0 1px 3px #cfccd1; }
.ribbon { display: flex; height: 124px; padding-top: 5px; border-bottom: 2px solid #e2e0e4; }
.group { display: flex; flex-direction: column; align-items: center; border-right: 1px solid #e6e2e9; height: 114px; }
.group h2 { font-size: 12px; line-height: 16px; margin-top: 5px; }
.tools { display: flex; height: 96px; align-self: stretch; flex: none; }
.g-task { width: 382px; } .g-task .tools { padding-left: 14px; }
.g-res { width: 256px; } .g-res .tools { padding-left: 10px; }
.g-data { width: 398px; } .g-data .tools { padding-left: 9px; }
.g-zoom { width: 308px; } .g-zoom .tools { padding-left: 10px; }
.g-split { width: 230px; } .g-split .tools { padding-left: 13px; }
.g-win { width: 132px; } .g-win .tools { padding-left: 9px; }
.g-mac { width: 74px; } .g-mac .tools { padding-left: 5px; }
.big { display: flex; flex-direction: column; align-items: center; width: 54px; border-radius: 6px; padding-top: 8px; }
.big > svg { height: 38px; margin-bottom: 1px; }
.big span { display: flex; align-items: center; justify-content: center; gap: 4px; height: 20px; white-space: nowrap; }
.big.on { background: #efedef; box-shadow: inset 0 0 0 1px #a5a2a7; }
.big.w60 { width: 62px; } .big.w68 { width: 68px; } .big.w62 { width: 62px; }
.stack { display: flex; flex-direction: column; margin-left: 6px; }
.small { display: flex; align-items: center; height: 32px; gap: 5px; white-space: nowrap; }
.small.wide .chev { margin-left: 12px; }
.fields { display: grid; grid-template-columns: 95px 118px; grid-auto-rows: 32px; align-items: center; margin-left: 4px; }
.fields label { display: flex; align-items: center; gap: 5px; white-space: nowrap; }
.combo { display: grid; align-items: center; width: 118px; height: 30px; }
.combo > * { grid-area: 1 / 1; }
.combo .chev { justify-self: end; margin-right: 4px; pointer-events: none; }
.combo select { appearance: none; width: 100%; height: 30px; padding: 0 0 0 3px; font: inherit; color: #55525a; background: #fff; border: 1px solid #bdbac2; border-radius: 4px; }
.combo select:disabled { background: #f4f2f4; border-color: #f1eff1; }
.combo select:disabled + .chev { color: #c9c6cc; }
.scale { display: flex; flex-direction: column; }
.scale label, .scale .combo { margin: 1px 0; }
.scale label { height: 30px; line-height: 30px; }
.split { display: grid; grid-template-columns: 89px 118px; grid-auto-rows: 32px; align-items: center; }
.split label { display: flex; align-items: center; gap: 6px; }
.split input { appearance: none; width: 17px; height: 17px; margin: 0; border: 1px solid #a9a6ab; border-radius: 3px; background: #fff; }
.collapse { align-self: flex-end; margin: 0 11px 5px auto; width: 16px; height: 20px; }

/* quick access toolbar */
.qat { display: flex; align-items: center; height: 41px; padding-top: 3px; }
.qat button { width: 35px; height: 32px; display: grid; place-items: center; color: #5f5b60; }
.qat .thin { width: 11px; }
.qat .dim { color: #b3b0b5; }
.sep { width: 1px; height: 26px; margin: 0 5px; background: #e3e1e5; }

/* work area */
.work { flex: 1; min-height: 0; display: flex; }
.viewname { width: 33px; flex: none; writing-mode: vertical-rl; transform: rotate(180deg); text-align: center; line-height: 33px; font-weight: 600; font-size: 17px; color: #2a7f52; background: #ebe9ec; }
.left { width: 622px; flex: none; display: flex; flex-direction: column; border-right: 6px solid #dddbdf; }
.clip { flex: 1; min-height: 0; overflow: hidden; background: #fff; }
.tasks { width: 616px; table-layout: fixed; border-collapse: separate; border-spacing: 0; font-family: Lato, "Open Sans", sans-serif; font-size: 17px; line-height: 20px; color: #4a474d; }
.c-n { width: 46px; } .c-i { width: 51px; } .c-m { width: 75px; } .c-t { width: 338px; } .c-d { width: 106px; }
.tasks thead th { height: 43px; padding: 0 5px 2px; background: #eeecef; border-right: 1px solid #dcdade; border-bottom: 1px solid #c9c6cb; font: 14px/20px "Open Sans", sans-serif; color: #8b888d; text-align: left; vertical-align: bottom; }
.tasks thead th.mode { padding-bottom: 0; }
.mode span { width: 44px; display: inline-block; vertical-align: bottom; }
.tasks thead th.info { background: #d8d6d9; padding: 0 0 6px 14px; }
.dd { float: right; margin: 8px 1px 0 0; border: 4px solid transparent; border-top: 5px solid #77747a; border-bottom: 0; }
.mode .dd { margin-top: 28px; }
.tasks tbody th { font: 14px/20px "Open Sans", sans-serif; color: #a3a0a5; background: #f1eff2; border-right: 1px solid #c9c6cb; border-bottom: 1px solid #e6e3e8; padding: 0; }
.tasks td { height: 28px; padding: 0 0 0 4px; border-right: 1px solid #e6e0e8; border-bottom: 1px solid #e6e2e8; white-space: nowrap; }
.tasks td:last-child { border-right: 0; }
.sum td { font-weight: 700; color: #1c1a1e; }
.tasks .top td { font-size: 19px; border-bottom-color: #8e8b90; }
.tasks .top td:last-child { font-size: 17px; }
.tasks .top th { background: #d8d6d9; color: #3b383d; }
.tasks .top td:nth-child(2) { border: 2px solid #3c8a4c; }
.m { width: 18px; height: 18px; }
.tri { display: inline-block; width: 10px; height: 6px; background: linear-gradient(135deg, transparent 50%, #4a474d 50%) 0 0 / 6px 6px no-repeat; margin-bottom: 3px; }
.tasks .l0 { padding-left: 6px; } .tasks .l1 { padding-left: 22px; } .tasks .l2 { padding-left: 48px; } .tasks .l3 { padding-left: 64px; } .tasks .l4 { padding-left: 80px; }
.tasks .sum .l2 { padding-left: 38px; } .tasks .sum .l3 { padding-left: 54px; }

/* time scale and chart */
.right { flex: 1; min-width: 0; display: flex; flex-direction: column; position: relative; }
.weeks, .days { display: flex; overflow: hidden; background: #eeecef; color: #8b888d; flex: none; }
.weeks { height: 21px; font-size: 12px; line-height: 22px; }
.weeks span { width: 175px; flex: none; padding-left: 6px; }
.weeks .part { width: 75px; }
.days { height: 22px; line-height: 20px; border-bottom: 1px solid #c9c6cb; font-size: 13px; }
.days i { width: 25px; flex: none; text-align: center; font-style: normal; background: linear-gradient(#d2cfd4, #d2cfd4) 100% 6px / 1px 10px no-repeat; }
.chart { flex: 1; min-height: 0; background: repeating-linear-gradient(90deg, #fff 0 50px, #fcfafc 50px 100px, #fff 100px 175px); }
.plot { width: 100%; height: 100%; }
.plot path { fill: none; }
.plot .start { stroke: #b5b2b7; stroke-dasharray: 2 2; }
.plot .frame { stroke: #a5a2a7; }
.sumbar path { stroke: #6b686e; stroke-width: 2; }
.bar rect { fill: #98c0ec; }
.bar .soft { fill: url(#fade); }
.names { font-weight: 700; font-size: 16px; fill: #222025; }
.link path { stroke: #5b93d6; marker-end: url(#ab); }
.link .h { marker-end: url(#ah); }
.link .n { marker-end: none; stroke: #9fa9dd; }
.klink path { stroke: #5f5b60; marker-end: url(#ak); }
.plot .stone { fill: #5f5b60; }
.plot marker path { fill: #3f7fc8; }
.plot #ak path { fill: #2f2d30; }

/* scroll bars */
.hbar { display: flex; align-items: center; height: 22px; flex: none; padding: 0 6px 2px; background: #f9f7fa; }
.track { flex: 1; }
.thumb { display: block; height: 11px; border-radius: 6px; background: #7f7b80; }
.t1 { width: 263px; margin-left: 5px; }
.t2 { width: 448px; margin-left: 88px; }
.al, .ar, .au, .ad { width: 0; height: 0; border: 5px solid transparent; flex: none; }
.al { border-right: 8px solid #77747a; border-left: 0; }
.ar { border-left: 8px solid #77747a; border-right: 0; }
.au { border-bottom: 8px solid #77747a; border-top: 0; }
.ad { border-top: 8px solid #77747a; border-bottom: 0; }
.vbar { width: 21px; flex: none; display: flex; flex-direction: column; align-items: center; padding: 4px 0 34px; background: #f7f5f8; }
.vthumb { width: 11px; height: 240px; margin: 6px 0 auto; border-radius: 6px; background: #7f7b80; }
.brand { position: absolute; right: -9px; bottom: -3px; width: 40px; height: 40px; z-index: 1; display: flex; flex-direction: column; justify-content: space-between; background: rgba(255, 255, 255, 0.8); }
.brand b { height: 10px; width: 40px; background: #6fcde8; }
.brand b:first-child { width: 19px; background: #f4646f; }
.brand b:last-child { width: 20px; background: #5cbf80; align-self: flex-end; }

/* status bar */
.status { display: flex; align-items: center; height: 27px; flex: none; padding: 0 7px 0 15px; font-size: 13px; background: #f9f7fa; border-top: 1px solid #dcdade; }
.newtasks { display: flex; align-items: center; margin-left: 23px; }
.views { display: flex; margin-left: auto; color: #5f5b60; }
.views button { width: 50px; height: 26px; display: grid; place-items: center; }
.views .on { background: #e2e0e3; }
.zoomer { display: flex; align-items: center; gap: 6px; margin-left: 7px; }
.zoomer button { width: 10px; height: 10px; }
.zoomer input { appearance: none; width: 125px; height: 14px; margin: 0; background: linear-gradient(#8e8b90, #8e8b90) 0 50% / 100% 1px no-repeat, linear-gradient(#8e8b90, #8e8b90) 50% 50% / 1px 8px no-repeat; }
.zoomer input::-webkit-slider-thumb { appearance: none; width: 6px; height: 14px; background: #6b686e; }
```
